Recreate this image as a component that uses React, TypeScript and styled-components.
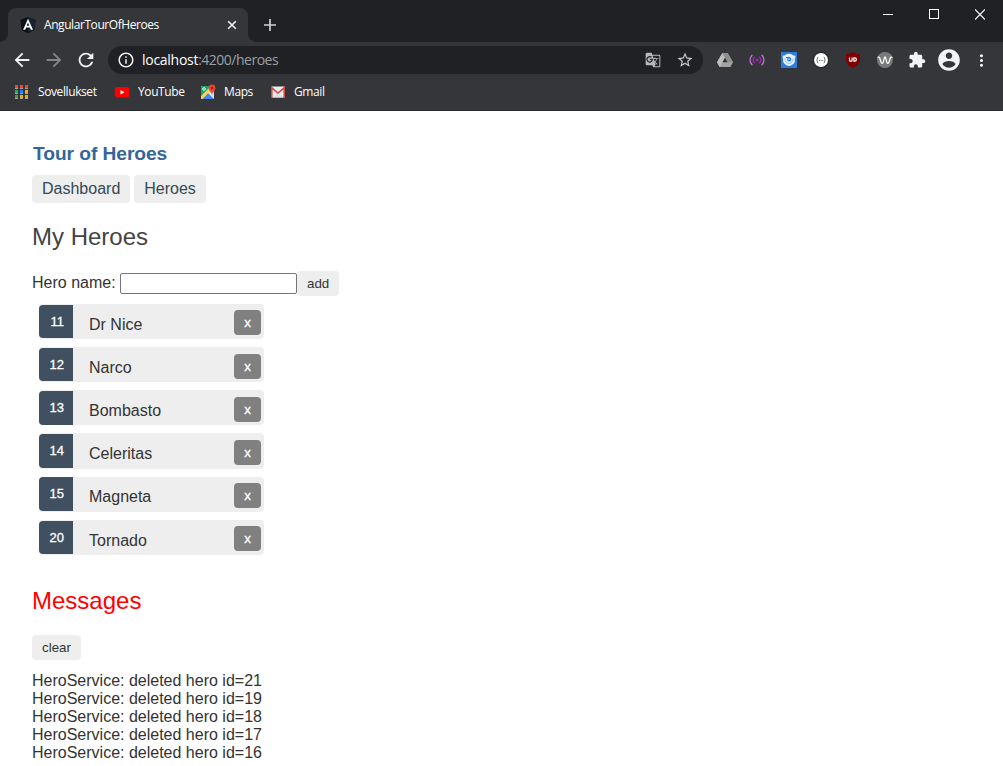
import React from "react";
import styled, { createGlobalStyle } from "styled-components";
import {
  MdArrowBack,
  MdArrowForward,
  MdRefresh,
  MdInfoOutline,
  MdStarBorder,
  MdGTranslate,
  MdExtension,
  MdMoreVert,
} from "react-icons/md";

const GlobalStyle = createGlobalStyle`
  * { box-sizing: border-box; }
  body { margin: 0; background: #fff; }
`;

const uiFont = `"Open Sans", "Noto Sans", sans-serif`;
const pageFont = `"Liberation Sans", Arial, sans-serif`;

const Window = styled.div`
  display: flex;
  flex-direction: column;
  width: 1003px;
  height: 766px;
  overflow: hidden;
  background: #fff;
`;

/* ---------- browser chrome ---------- */

const TabStrip = styled.header`
  display: flex;
  align-items: flex-start;
  height: 42px;
  flex: none;
  padding-left: 8px;
  background: #202124;
  font-family: ${uiFont};
`;

const Tab = styled.div`
  position: relative;
  display: flex;
  align-items: center;
  width: 240px;
  height: 34px;
  margin-top: 8px;
  padding: 0 9px 0 12px;
  border-radius: 8px 8px 0 0;
  background: #35363a;

  &::before,
  &::after {
    content: "";
    position: absolute;
    bottom: 0;
    width: 8px;
    height: 8px;
  }
  &::before {
    left: -8px;
    background: radial-gradient(circle at 0 0, transparent 7.5px, #35363a 8px);
  }
  &::after {
    right: -8px;
    background: radial-gradient(circle at 100% 0, transparent 7.5px, #35363a 8px);
  }
`;

const TabTitle = styled.span`
  flex: 1;
  margin-left: 8px;
  color: #fff;
  font-size: 12px;
  line-height: 16px;
  letter-spacing: -0.43px;
  white-space: nowrap;
`;

const NewTab = styled.div`
  display: flex;
  align-items: center;
  justify-content: center;
  width: 28px;
  height: 34px;
  margin: 8px 0 0 8px;
`;

const WindowControls = styled.div`
  display: flex;
  margin-left: auto;
`;

const WindowControl = styled.div`
  display: flex;
  align-items: center;
  justify-content: center;
  width: 46px;
  height: 29px;
`;

const Toolbar = styled.div`
  display: flex;
  align-items: center;
  height: 36px;
  flex: none;
  padding: 0 6px;
  background: #35363a;
`;

const ToolButton = styled.div<{ $color?: string }>`
  display: flex;
  align-items: center;
  justify-content: center;
  width: 32px;
  height: 28px;
  flex: none;
  color: ${(p) => p.$color ?? "#f1f3f4"};
`;

const AddressBar = styled.div`
  display: flex;
  align-items: center;
  width: 595px;
  height: 28px;
  margin: 0 6px;
  padding: 0 2px 0 9px;
  border-radius: 14px;
  background: #202124;
`;

const Address = styled.span`
  flex: 1;
  margin-left: 7px;
  color: #9aa0a6;
  font-family: ${uiFont};
  font-size: 14px;
  line-height: 20px;
  letter-spacing: -0.5px;
`;

const Host = styled.span`
  color: #fff;
  letter-spacing: -0.28px;
`;

const BookmarksBar = styled.nav`
  display: flex;
  align-items: center;
  height: 33px;
  flex: none;
  padding: 0 0 5px 13px;
  border-bottom: 1px solid #28292c;
  background: #35363a;
`;

const Bookmark = styled.div<{ $width: number; $gap?: number }>`
  display: flex;
  align-items: center;
  gap: ${(p) => p.$gap ?? 8}px;
  width: ${(p) => p.$width}px;
  color: #fff;
  font-family: ${uiFont};
  font-size: 12px;
  line-height: 16px;
  letter-spacing: -0.4px;
  white-space: nowrap;
`;

/* ---------- page ---------- */

const Page = styled.main`
  padding: 32px 32px 0;
  color: #333;
  font-family: ${pageFont};
  font-size: 16px;
`;

const AppTitle = styled.h1`
  margin: 0 0 10px 1px;
  color: #369;
  font-size: 19.2px;
  font-weight: bold;
  line-height: 22px;
  letter-spacing: -0.06px;
`;

const NavLinks = styled.nav`
  display: flex;
  gap: 4px;
  margin-bottom: 20px;
`;

const NavLink = styled.a`
  height: 28px;
  padding: 5px 10px;
  border-radius: 4px;
  background: #eee;
  color: #334953;
  line-height: 18px;
`;

const Heading = styled.h2<{ $color?: string }>`
  margin: 0;
  color: ${(p) => p.$color ?? "#444"};
  font-size: 24px;
  font-weight: normal;
  line-height: 28px;
`;

const HeroForm = styled.div`
  display: flex;
  align-items: center;
  height: 25px;
  margin: 20px 0 7.8px;
`;

const HeroLabel = styled.label`
  width: 88px;
  line-height: 18px;
  margin-top: -2px;
`;

const HeroInput = styled.input`
  width: 177px;
  height: 21px;
  padding: 1px 2px;
  border: 1px solid #767676;
  border-radius: 2px;
  outline: none;
`;

const ActionButton = styled.button`
  height: 25px;
  padding: 0 10px;
  border: 0;
  border-radius: 4px;
  background: #eee;
  color: #333;
  font-family: ${pageFont};
  font-size: 13.333px;
  line-height: 25px;
`;

const HeroList = styled.ul`
  display: flex;
  flex-direction: column;
  gap: 8px;
  width: 225px;
  margin: 0 0 0 7px;
  padding: 0;
  list-style: none;
`;

const HeroRow = styled.li`
  display: flex;
  align-items: flex-start;
  height: 35.2px;
  padding-right: 3px;
  border-radius: 4px;
  background: #eee;
`;

const Badge = styled.span`
  width: 34px;
  height: 33.6px;
  margin-top: 0.8px;
  padding-right: 9px;
  border-radius: 4px 0 0 4px;
  background: #405061;
  color: #fff;
  font-size: 13px;
  line-height: 33px;
  text-align: right;
  -webkit-text-stroke: 0.3px #fff;
`;

const HeroName = styled.span`
  flex: 1;
  margin: 11.82px 0 0 16px;
  line-height: 18px;
`;

const DeleteButton = styled.button`
  width: 27px;
  height: 25px;
  margin-top: 6.6px;
  padding: 0;
  border: 0;
  border-radius: 4px;
  background: #808080;
  color: #fff;
  font-family: ${pageFont};
  font-size: 13.333px;
  line-height: 25px;
  -webkit-text-stroke: 0.3px #fff;
`;

const Messages = styled.section`
  margin-top: 32px;

  ${ActionButton} {
    display: block;
    margin: 20px 0 12px;
  }
`;

const Message = styled.div`
  line-height: 18px;
`;

/* ---------- drawings ---------- */

const AngularIcon = () => (
  <svg width="16" height="17" viewBox="0 0 16 17">
    <path d="M8 0l7.6 2.7-1.2 10L8 16.6l-6.4-3.9L.4 2.7z" fill="#0b0f18" />
    <path d="M8 0l7.6 2.7-1.2 10L8 16.6z" fill="#1a2130" />
    <path
      d="M8 1.800L3.100 12.800h2.200l.9-2.300h3.700l.9 2.300h2.200zm0 3.800l1.300 3.100H6.700z"
      fill="#fff"
      fillRule="evenodd"
    />
  </svg>
);

const AppsIcon = () => {
  const colors = [
    ["#f44336", "#f44336", "#f44336"],
    ["#34a853", "#1a82ff", "#fbab00"],
    ["#34a853", "#fbab00", "#fbab00"],
  ];
  return (
    <svg width="16" height="16" viewBox="0 0 16 16" shapeRendering="crispEdges">
      {colors.map((row, y) =>
        row.map((c, x) => (
          <g key={`${x}${y}`}>
            <rect x={2 + x * 5} y={1 + y * 5} width="3" height="4" fill="#a5a5a0" />
            <rect x={2 + x * 5} y={1 + y * 5} width="3" height="3" fill={c} />
          </g>
        ))
      )}
    </svg>
  );
};

const YouTubeIcon = () => (
  <svg width="16" height="16" viewBox="0 0 16 16">
    <rect x="0.8" y="3" width="14.6" height="10.4" rx="2.4" fill="#f00" />
    <path d="M6.5 6v4.4l4-2.2z" fill="#fff" />
  </svg>
);

const MapsIcon = () => (
  <svg width="16" height="16" viewBox="0 0 16 16">
    <rect x="1" y="2" width="13" height="13" rx="1" fill="#e8eaed" />
    <path d="M1 3a1 1 0 0 1 1-1h9L1 12.5z" fill="#1fa463" />
    <path d="M2 15l6-6 6 6z" fill="#4285f4" />
    <path d="M1 12.2L8.5 5l2 2L2.2 15H1z" fill="#ffd04b" />
    <path d="M9 8l5 5.5V8z" fill="#dadce0" />
    <circle cx="4" cy="5" r="1.3" fill="none" stroke="#fff" strokeWidth="0.9" />
    <path d="M12 0.6a3.4 3.4 0 0 0-3.4 3.4c0 2.5 2.8 3.6 3.4 7 .6-3.4 3.4-4.5 3.4-7A3.4 3.4 0 0 0 12 .6z" fill="#ea4335" />
    <circle cx="12" cy="4" r="1.2" fill="#8c231b" />
  </svg>
);

const GmailIcon = () => (
  <svg width="16" height="16" viewBox="0 0 16 16">
    <rect x="1" y="2.6" width="14" height="11" rx="1" fill="#eceff1" />
    <path d="M3 13.6L8 8l5 5.6z" fill="#dcdfe2" />
    <path d="M1.8 13.6V3.8L8 9l6.2-5.2v9.8" fill="none" stroke="#d54b3d" strokeWidth="1.6" />
  </svg>
);

const DriveIcon = () => (
  <svg width="16" height="16" viewBox="0 0 16 16">
    <path d="M5.4 1h5.2L16 10.3 13.3 15H2.7L0 10.3z" fill="#a3a3a3" />
    <path d="M5.4 1L0 10.3 2.7 15 8 5.6z" fill="#bdbdbd" />
    <path d="M5.4 1h5.2L16 10.3h-5.4z" fill="#8f8f8f" />
    <path d="M8 5.8l2.6 4.5H5.4z" fill="#35363a" />
  </svg>
);

const BroadcastIcon = () => (
  <svg width="16" height="16" viewBox="0 0 16 16" fill="none" strokeLinecap="round">
    <circle cx="8" cy="8" r="1.5" fill="#9c27b0" />
    <path d="M5.4 5.2a4.2 4.2 0 0 0 0 5.6M10.6 5.2a4.2 4.2 0 0 1 0 5.6" stroke="#9c27b0" strokeWidth="1.4" />
    <path d="M3 3.2a7 7 0 0 0 0 9.6M13 3.2a7 7 0 0 1 0 9.6" stroke="#b677c4" strokeWidth="1.4" />
  </svg>
);

const SwirlIcon = () => (
  <svg width="16" height="16" viewBox="0 0 16 16">
    <rect width="16" height="16" fill="#2b7de1" />
    <path d="M1.500 3.500C2.500 4 3.300 3.700 4.300 3a6.500 6.500 0 0 1 7.400 0c1 .7 1.800 1 2.800.5-.1 1.300-.5 2-.6 3.500A6 6 0 0 1 8 14a6 6 0 0 1-5.900-7c-.1-1.500-.5-2.200-.6-3.500z" fill="#e9f2fd" />
    <path d="M4.200 6.200a4 4 0 1 0 7.600 0" fill="none" stroke="#8dbcf3" strokeWidth="0.900" />
    <path d="M5 5.500h4.200" stroke="#2b7de1" strokeWidth="1.200" />
    <circle cx="8.200" cy="7.400" r="2.100" fill="#2b7de1" />
    <circle cx="8" cy="7.200" r="0.800" fill="#fff" />
  </svg>
);

const BracesIcon = () => (
  <svg width="16" height="16" viewBox="0 0 16 16">
    <circle cx="8" cy="8" r="7.8" fill="#222" />
    <circle cx="8" cy="8" r="7" fill="#fff" />
    <path d="M5.200 5C4 5 5 7.600 3.600 8 5 8.400 4 11 5.200 11M10.800 5c1.200 0 .2 2.600 1.600 3-1.400.4-.4 3-1.600 3" fill="none" stroke="#555" />
    <path d="M6 8.500h1M7.600 8.500h1M9.200 8.500h1" stroke="#777" />
  </svg>
);

const ShieldIcon = () => (
  <svg width="16" height="16" viewBox="0 0 16 16">
    <path d="M8 0c2 1.500 4.500 2 7 2v5c0 4.500-3 7-7 9-4-2-7-4.500-7-9V2c2.500 0 5-.5 7-2z" fill="#800000" />
    <path d="M4.500 5.400v2.600a1.300 1.300 0 0 0 2.600 0V5.400" fill="none" stroke="#fff" strokeWidth="1.200" />
    <path d="M8.900 5.900h.9a1.600 1.600 0 0 1 0 3.200h-.9z" fill="none" stroke="#fff" strokeWidth="1.200" />
  </svg>
);

const WaveIcon = () => (
  <svg width="16" height="16" viewBox="0 0 16 16">
    <circle cx="8" cy="8" r="8" fill="#7a7a7a" />
    <path
      d="M0.600 5.500C1.900 4.500 2.700 5.400 3.200 7.500c.6 2.300 1 3.900 2.100 3.900C6.800 11.400 6.800 5 8 5s1.200 6.400 2.700 6.400c1.100 0 1.500-1.600 2.100-3.900.5-2.100 1.300-3 2.600-2"
      fill="none"
      stroke="#fff"
      strokeWidth="1.300"
    />
  </svg>
);

const AccountIcon = () => (
  <svg width="26" height="26" viewBox="0 0 24 24" fill="currentColor">
    <path d="M12 2C6.480 2 2 6.480 2 12s4.480 10 10 10 10-4.480 10-10S17.520 2 12 2zm0 3c1.660 0 3 1.340 3 3s-1.340 3-3 3-3-1.340-3-3 1.340-3 3-3zm0 14.200c-2.500 0-4.710-1.280-6-3.220.03-1.990 4-3.080 6-3.080 1.990 0 5.970 1.090 6 3.080-1.290 1.940-3.500 3.220-6 3.220z" />
  </svg>
);

const heroes = [
  { id: 11, name: "Dr Nice" },
  { id: 12, name: "Narco" },
  { id: 13, name: "Bombasto" },
  { id: 14, name: "Celeritas" },
  { id: 15, name: "Magneta" },
  { id: 20, name: "Tornado" },
];

const deletedIds = [21, 19, 18, 17, 16];

export default function App() {
  return (
    <Window>
      <GlobalStyle />
      <TabStrip>
        <Tab>
          <AngularIcon />
          <TabTitle>AngularTourOfHeroes</TabTitle>
          <svg width="14" height="14" viewBox="0 0 14 14">
            <path d="M3.200 3.200l7.600 7.600M10.800 3.200l-7.600 7.600" stroke="#f1f3f4" strokeWidth="1.600" />
          </svg>
        </Tab>
        <NewTab>
          <svg width="12" height="12" viewBox="0 0 12 12">
            <path d="M6 0v12M0 6h12" stroke="#d0d1d3" strokeWidth="1.700" />
          </svg>
        </NewTab>
        <WindowControls>
          <WindowControl>
            <svg width="10" height="11" viewBox="0 0 10 11">
              <path d="M0 5.500h10" stroke="#fff" />
            </svg>
          </WindowControl>
          <WindowControl>
            <svg width="10" height="11" viewBox="0 0 10 11">
              <rect x="0.500" y="0.500" width="9" height="9" fill="none" stroke="#fff" />
            </svg>
          </WindowControl>
          <WindowControl>
            <svg width="10" height="11" viewBox="0 0 10 11">
              <path d="M0 .5l10 10M10 .5l-10 10" stroke="#fff" strokeWidth="1.200" />
            </svg>
          </WindowControl>
        </WindowControls>
      </TabStrip>

      <Toolbar>
        <ToolButton><MdArrowBack size={22} /></ToolButton>
        <ToolButton $color="#85868a"><MdArrowForward size={22} /></ToolButton>
        <ToolButton><MdRefresh size={22} /></ToolButton>
        <AddressBar>
          <MdInfoOutline size={18} color="#f1f3f4" />
          <Address>
            <Host>localhost</Host>:4200/heroes
          </Address>
          <ToolButton $color="#b8b9bb"><MdGTranslate size={16} /></ToolButton>
          <ToolButton $color="#c8cacd"><MdStarBorder size={18} /></ToolButton>
        </AddressBar>
        <ToolButton><DriveIcon /></ToolButton>
        <ToolButton><BroadcastIcon /></ToolButton>
        <ToolButton><SwirlIcon /></ToolButton>
        <ToolButton><BracesIcon /></ToolButton>
        <ToolButton><ShieldIcon /></ToolButton>
        <ToolButton><WaveIcon /></ToolButton>
        <ToolButton><MdExtension size={18} /></ToolButton>
        <ToolButton><AccountIcon /></ToolButton>
        <ToolButton><MdMoreVert size={19} /></ToolButton>
      </Toolbar>

      <BookmarksBar>
        <Bookmark $width={101} $gap={9}><AppsIcon />Sovellukset</Bookmark>
        <Bookmark $width={86}><YouTubeIcon />YouTube</Bookmark>
        <Bookmark $width={70}><MapsIcon />Maps</Bookmark>
        <Bookmark $width={60}><GmailIcon />Gmail</Bookmark>
      </BookmarksBar>

      <Page>
        <AppTitle>Tour of Heroes</AppTitle>
        <NavLinks>
          <NavLink>Dashboard</NavLink>
          <NavLink>Heroes</NavLink>
        </NavLinks>
        <Heading>My Heroes</Heading>
        <HeroForm>
          <HeroLabel>Hero name:</HeroLabel>
          <HeroInput />
          <ActionButton>add</ActionButton>
        </HeroForm>
        <HeroList>
          {heroes.map((hero) => (
            <HeroRow key={hero.id}>
              <Badge>{hero.id}</Badge>
              <HeroName>{hero.name}</HeroName>
              <DeleteButton>x</DeleteButton>
            </HeroRow>
          ))}
        </HeroList>
        <Messages>
          <Heading $color="#f00">Messages</Heading>
          <ActionButton>clear</ActionButton>
          {deletedIds.map((id) => (
            <Message key={id}>HeroService: deleted hero id={id}</Message>
          ))}
        </Messages>
      </Page>
    </Window>
  );
}
